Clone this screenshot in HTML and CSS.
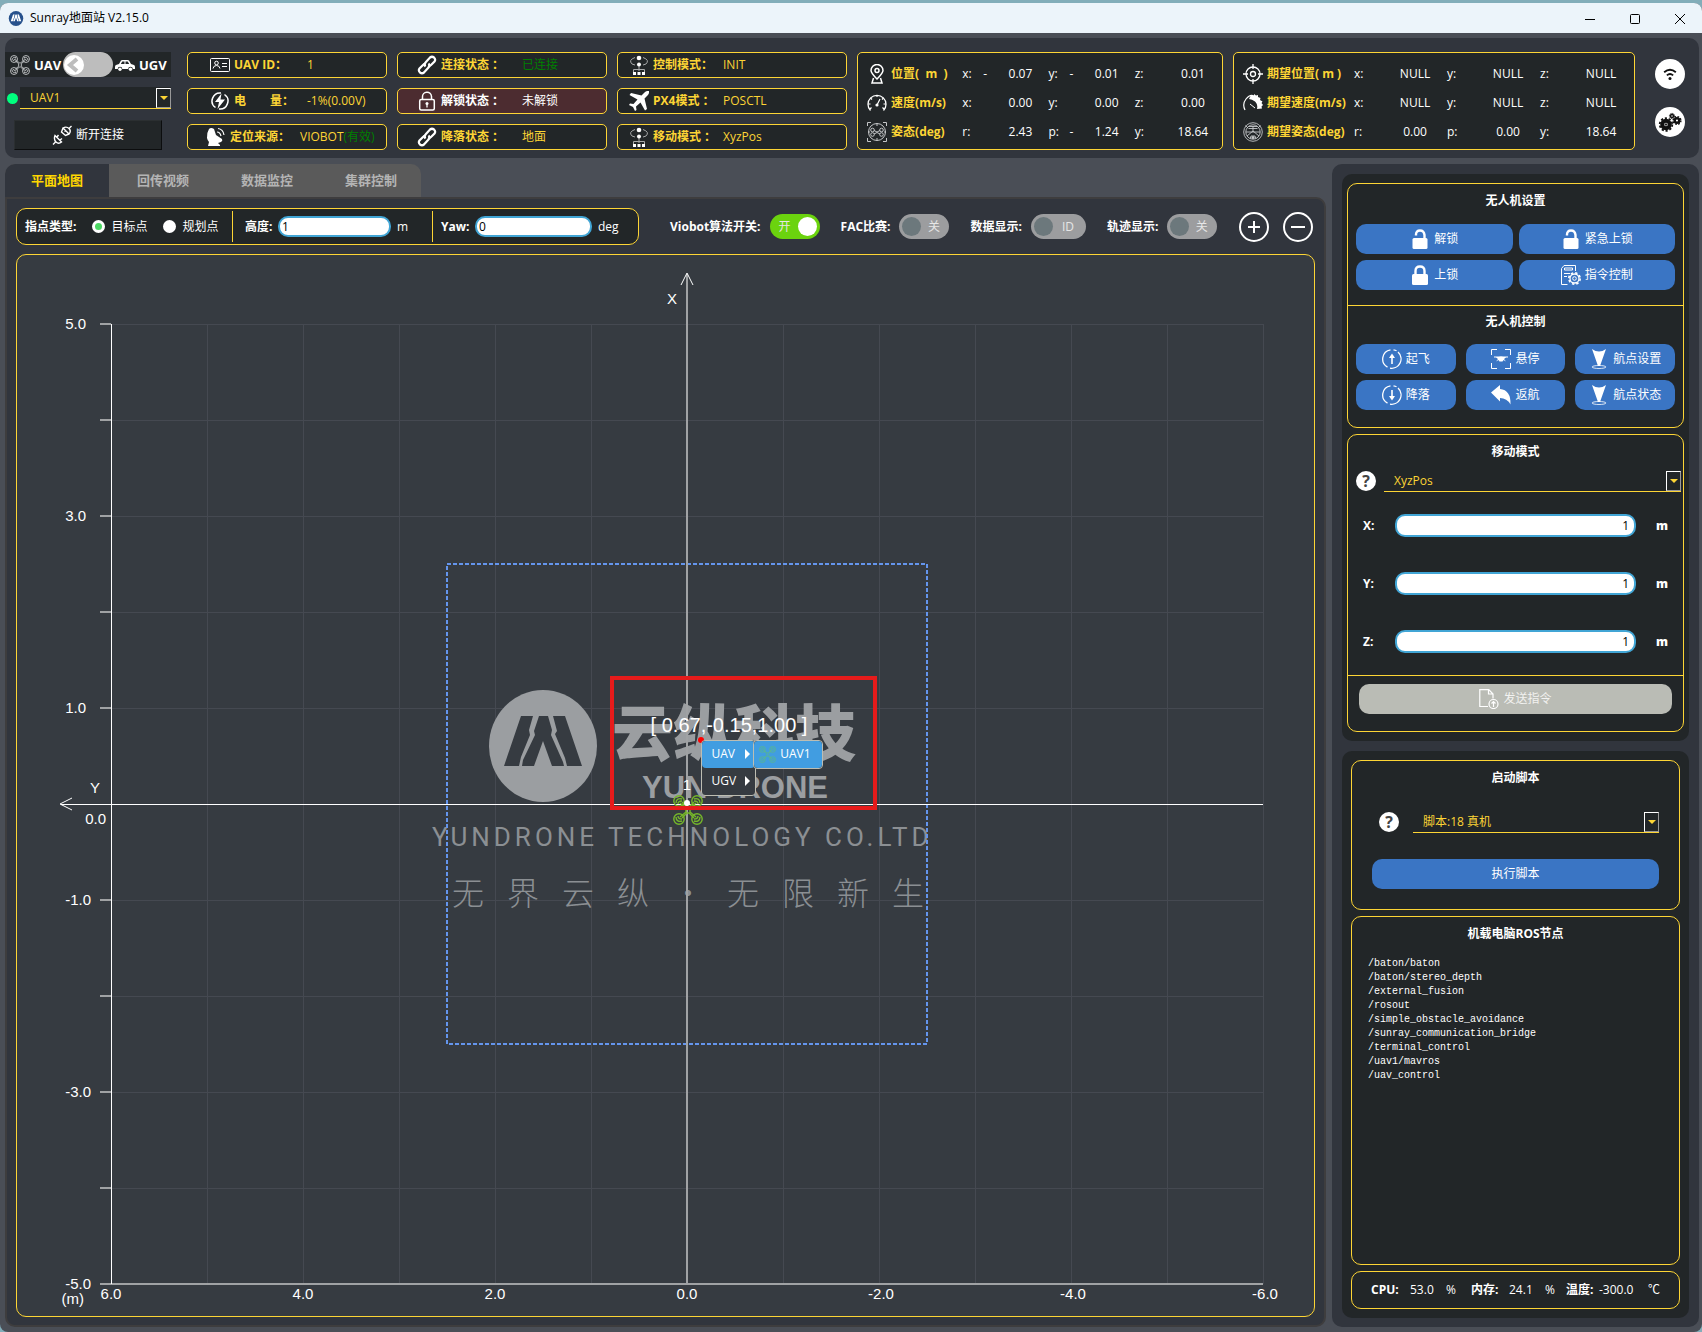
FILE: index.html
```html
<!DOCTYPE html>
<html lang="zh-CN">
<head>
    <meta charset="UTF-8">
    <meta name="viewport" content="width=device-width, initial-scale=1.0">
    <title>Sunray地面站 V2.15.0</title>
    <link rel="stylesheet" href="styles.css">
</head>
<body>
    <!-- 图标 -->
    <svg class="sprite" aria-hidden="true">
        <symbol id="i-logo" viewBox="0 0 108 112">
            <ellipse cx="54" cy="56" rx="54" ry="56" fill="currentColor"/>
            <path class="cut" d="M32 26h12l-4 14 1 5-9 22-2 9H15zM50 26h9l4 14-1 5 12 27 1 4H63L54 51l-9 25H33l1-6 12-25-1-4zM64 26h12l17 50H78l-2-8-10-24 2-3z"/>
        </symbol>
        <symbol id="i-drone" viewBox="0 0 30 30">
            <g fill="none" stroke="currentColor" stroke-width="1.4">
                <circle cx="6" cy="6" r="5.2"/><circle cx="24" cy="6" r="5.2"/>
                <circle cx="6" cy="24" r="5.2"/><circle cx="24" cy="24" r="5.2"/>
                <path d="M3 8c0-4 3-5 6-4M5 9c0-2 2-3 4-3M27 8c0-4-3-5-6-4M25 9c0-2-2-3-4-3M3 22c0 4 3 5 6 4M5 21c0 2 2 3 4 3M27 22c0 4-3 5-6 4M25 21c0 2-2 3-4 3"/>
                <path d="M7 8l6 5v4l-6 5M23 8l-6 5v4l6 5M9 7l5 5h2l5-5M9 23l5-5h2l5 5"/>
            </g>
        </symbol>
        <symbol id="i-car" viewBox="0 0 20 20">
            <path d="M1 10l3-1 2-3.500q.5-.5 1.500-.5h5q1 0 1.500.5L16 9l3 1q1 .5 1 2v2h-2.200a2.300 2.300 0 0 0-4.600 0H7.300a2.300 2.300 0 0 0-4.600 0H0v-2q0-1.500 1-2z" fill="currentColor"/>
            <path class="ink" d="M7.300 6.500h2.200V9H5.800zM10.500 6.500h2.200L14.200 9h-3.700z"/>
            <circle cx="5" cy="14.300" r="1.700" fill="currentColor"/><circle cx="15.500" cy="14.300" r="1.700" fill="currentColor"/>
        </symbol>
        <symbol id="i-plug" viewBox="0 0 20 20">
            <g fill="none" stroke="currentColor" stroke-width="1.400">
                <path d="M3 10.500l6.500 6.500q-3 2.500-5.500 0t-1-6.500zM3.500 17L1 19.500M5 12l1.500-2M8 15l2-1.500"/>
                <path d="M11 3l6 6q2.500-3 0-5.500T11 3zM17 3.500L19.500 1M11 3L9.500 7l4 3.500L17 9M12.500 6.500l1.500-1"/>
            </g>
        </symbol>
        <symbol id="i-card" viewBox="0 0 20 20">
            <g fill="none" stroke="currentColor">
                <rect x=".5" y="3.500" width="19" height="13" rx="1"/>
                <circle cx="6.500" cy="8" r="1.800"/><path d="M3 13.500q.5-3 3.500-3t3.500 3M12 8.500h5M12 11.500h5"/>
            </g>
        </symbol>
        <symbol id="i-bolt" viewBox="0 0 20 20">
            <path d="M11 2a8 8 0 0 0-5.500 14.500M9 18a8 8 0 0 0 5.500-14.500" fill="none" stroke="currentColor" stroke-width="1.500"/>
            <path d="M11.500 2.500L5 11h4l-1.500 7L15 8.500h-4.500z" fill="currentColor"/>
        </symbol>
        <symbol id="i-dish" viewBox="0 0 20 20">
            <path d="M3 2q2-2 5 0l2 6 6 4q1 2-1 3l-3 1 2 2v1H2l1-4q-1.500-1.500-2-4-.500-5 2-9z" fill="currentColor"/>
            <path d="M11 5q3 0 4 4M12 1.500q5 .5 6 6.500" fill="none" stroke="currentColor" stroke-width="1.200"/>
        </symbol>
        <symbol id="i-link" viewBox="0 0 20 20">
            <g fill="none" stroke="currentColor" stroke-width="2.200">
                <path d="M8.500 11.500q-2-2 0-4l4.500-5q2-1.500 4 0 2 2 .5 4L14 10q-1.500 1.500-3 1"/>
                <path d="M11.500 8.500q2 2 0 4l-4.500 5q-2 1.500-4 0-2-2-.5-4L6 10q1.500-1.500 3-1"/>
            </g>
        </symbol>
        <symbol id="i-lock-line" viewBox="0 0 20 20">
            <path d="M5.500 8V6a4.500 4.500 0 0 1 9-.5V8" fill="none" stroke="currentColor" stroke-width="1.500"/>
            <rect x="2.700" y="8.500" width="14.600" height="10.500" rx="1.500" fill="none" stroke="currentColor" stroke-width="1.500"/>
            <circle cx="10" cy="12.500" r="1.500" fill="currentColor"/><path d="M10 13v3.500" stroke="currentColor" stroke-width="1.300"/>
        </symbol>
        <symbol id="i-mode" viewBox="0 0 20 20">
            <g fill="none" stroke="currentColor" opacity=".6"><path d="M6 2.500Q-1 5 3 9l3 1M14 2.500q7 2.500 3 6.500l-3 1"/><path d="M10 11v5M4.500 17v-2.500h11V17"/></g>
            <circle cx="10" cy="3" r="2.300" fill="currentColor"/><circle cx="10" cy="9.500" r="2" fill="currentColor"/>
            <path d="M4 17h3v3H4zM8.500 17h3v3h-3zM13 17h3v3h-3z" fill="currentColor"/>
        </symbol>
        <symbol id="i-plane" viewBox="0 0 20 20">
            <path d="M20 0q-2.500-.5-4.500 1.500L12.500 4.500 2 2 .5 4l8 4.500-4 4.500L1 12.500 0 14l4 2 2 4 1.500-1L7 15.500l4.500-4L16 19.500l2-1.500-2.500-10.500 3-3Q20.500 2.500 20 0z" fill="currentColor"/>
        </symbol>
        <symbol id="i-pin" viewBox="0 0 20 20">
            <g fill="none" stroke="currentColor" stroke-width="1.500">
                <path d="M10 15Q4 9 4 6.500a6 6 0 0 1 12 0Q16 9 10 15z"/><circle cx="10" cy="6.500" r="2"/>
                <path d="M6.500 14L5 19h10l-1.500-5"/>
            </g>
        </symbol>
        <symbol id="i-gauge" viewBox="0 0 20 20">
            <path d="M3.500 17.500a9 9 0 1 1 13 0" fill="none" stroke="currentColor" stroke-width="1.300"/>
            <path d="M3 16l1.500-1.500M1 11h2.500M3.500 5l1.500 1.500M10 2v2M16.500 5L15 6.500M19 11h-2.500M17 16l-1.500-1.500M10 12l3-6" stroke="currentColor" stroke-width="1.200"/>
            <circle cx="10" cy="12" r="1.600" fill="currentColor"/>
        </symbol>
        <symbol id="i-attitude" viewBox="0 0 20 20">
            <g fill="none" stroke="currentColor">
                <path d="M.5 4V.5H4M16 .5h3.500V4M19.500 16v3.500H16M4 19.500H.5V16" /><circle cx="10" cy="10" r="8.500"/>
                <circle cx="5.500" cy="8" r="1.800"/><circle cx="14.500" cy="8" r="1.800"/><circle cx="5.500" cy="12.500" r="1.800"/><circle cx="14.500" cy="12.500" r="1.800"/>
                <path d="M7 8.500l3 1.500 3-1.500M7 12l3-1.500 3 1.500M10 1v3M10 16v3M1 10h2M17 10h2"/>
            </g>
        </symbol>
        <symbol id="i-target" viewBox="0 0 20 20">
            <g fill="none" stroke="currentColor" stroke-width="1.300"><circle cx="10" cy="10" r="7"/><circle cx="10" cy="10" r="2.500"/><path d="M10 0v5M10 15v5M0 10h5M15 10h5"/></g>
        </symbol>
        <symbol id="i-speed" viewBox="0 0 20 20">
            <path d="M2 17Q-1 11 3 6t8-3" fill="none" stroke="currentColor" stroke-width="1.200"/>
            <path d="M8 2l3 1V1l2 1.500L15 2v2l2.500 1-.5 2 2.500 1.500-1 1.500L20 12l-1.500 1.500.5 2-5 .5q1-5-2-7.500T6 6z" fill="currentColor"/>
            <path d="M7 11l5 4" stroke="currentColor"/>
        </symbol>
        <symbol id="i-compass" viewBox="0 0 20 20">
            <g fill="none" stroke="currentColor" stroke-width=".9"><circle cx="10" cy="10" r="9.300"/><circle cx="10" cy="10" r="7.200"/>
                <path d="M3 10h14M6 6.500h8M6 4.500l8 0M10 4v6M4 14l6-5 6 5M7 17l1-3h4l1 3M2.500 3.500l3 3M17.500 3.500l-3 3"/></g>
            <circle cx="10" cy="15.500" r="1.500" fill="currentColor"/>
        </symbol>
        <symbol id="i-wifi" viewBox="0 0 20 20">
            <path d="M3.500 8q6.500-5.500 13 0M6.500 11.500q3.500-3 7 0" fill="none" stroke="currentColor" stroke-width="2"/><circle cx="10" cy="15" r="1.700" fill="currentColor"/>
        </symbol>
        <symbol id="i-gears" viewBox="0 0 24 20">
            <g fill="none" stroke="currentColor">
                <circle cx="8" cy="12.500" r="3.800" stroke-width="4"/><circle cx="8" cy="12.500" r="6.300" stroke-width="1.800" stroke-dasharray="2.200 1.758"/>
                <circle cx="8" cy="12.500" r=".8" fill="currentColor"/>
                <circle cx="19" cy="8.500" r="2.300" stroke-width="2.500"/><circle cx="19" cy="8.500" r="3.900" stroke-width="1.400" stroke-dasharray="1.700 1.363"/>
                <circle cx="14" cy="4" r="1.500" stroke-width="1.500"/><circle cx="14" cy="4" r="2.600" stroke-dasharray="1.200 .842"/>
            </g>
        </symbol>
        <symbol id="i-unlock" viewBox="0 0 20 20">
            <path d="M6 6.500V5.500Q6 1.500 10 1.500T14.500 6v5" fill="none" stroke="currentColor" stroke-width="2.400"/><rect x="2.500" y="9" width="15" height="11" rx="1.500" fill="currentColor"/>
        </symbol>
        <symbol id="i-lock" viewBox="0 0 20 20">
            <path d="M5.500 10V6q0-4.500 4.500-4.500T14.500 6v4" fill="none" stroke="currentColor" stroke-width="2.400"/><rect x="2" y="9" width="16" height="11" rx="1.500" fill="currentColor"/>
        </symbol>
        <symbol id="i-command" viewBox="0 0 20 20">
            <g fill="none" stroke="currentColor"><path d="M6.500 19.500H.5V3.500L3 .5h11.500V6M3.500 3h8v2h-8zM3 8.500h6M3 11.500h3"/><circle cx="13.500" cy="13.500" r="1.800"/><circle cx="13.500" cy="13.500" r="4.500" stroke-width="1.300"/><circle cx="13.500" cy="13.500" r="5.700" stroke-width="1.600" stroke-dasharray="2.400 2.077"/></g>
        </symbol>
        <symbol id="i-up" viewBox="0 0 20 20">
            <path d="M8.500.8a9.300 9.300 0 0 0-3 17.300M8 19.100a9.300 9.300 0 0 0 8-16M11.500.8q2 .3 3 1" fill="none" stroke="currentColor" stroke-width="1.300"/><path d="M10 15V7" stroke="currentColor" stroke-width="1.600"/><path d="M10 4.500L13 9H7z" fill="currentColor"/>
        </symbol>
        <symbol id="i-down" viewBox="0 0 20 20">
            <path d="M8.500.8a9.300 9.300 0 0 0-3 17.300M8 19.100a9.300 9.300 0 0 0 8-16M11.500.8q2 .3 3 1" fill="none" stroke="currentColor" stroke-width="1.300"/><path d="M10 5v8" stroke="currentColor" stroke-width="1.600"/><path d="M10 15.500L7 11h6z" fill="currentColor"/>
        </symbol>
        <symbol id="i-hover" viewBox="0 0 20 20">
            <path d="M.5 6V.5H6M14 .5h5.500V6M19.500 14v5.500H14M6 19.500H.5V14" fill="none" stroke="currentColor"/><path d="M3 7.500h4.500q2.500-.7 5 0H17v1h-2l-2 1.500 2 2.500-2.500-1.500-1 1.500h-3l-1-1.500L5 12.500 7 10 5 8.500H3z" fill="currentColor"/>
        </symbol>
        <symbol id="i-back" viewBox="0 0 20 20">
            <path d="M0 7.500L9 0v4q11 1 10.500 15.500Q16 13 9 13v3.500z" fill="currentColor"/>
        </symbol>
        <symbol id="i-waypoint" viewBox="0 0 20 20">
            <path d="M3 0q7 5 14 0L11 17H9z" fill="currentColor"/><ellipse cx="10" cy="18" rx="7" ry="1.500" fill="none" stroke="currentColor" stroke-width=".8"/>
        </symbol>
        <symbol id="i-send" viewBox="0 0 20 20">
            <g fill="none" stroke="currentColor" stroke-width="1.200"><path d="M9 17.500H.8V.7h9L14 5v4.500M9.500.7V5H14"/><circle cx="14.500" cy="15" r="4.500"/><path d="M14.500 18v-5.500M12.500 14.500l2-2 2 2"/></g>
        </symbol>
    </svg>

    <div class="window">
        <div class="titlebar">
            <svg class="logo"><use href="#i-logo"/></svg>
            <span class="title">Sunray地面站 V2.15.0</span>
            <button class="win-btn" aria-label="最小化"><svg viewBox="0 0 10 10"><path d="M0 5.500h10"/></svg></button>
            <button class="win-btn" aria-label="最大化"><svg viewBox="0 0 10 10"><rect x=".5" y=".5" width="9" height="9" rx="1"/></svg></button>
            <button class="win-btn" aria-label="关闭"><svg viewBox="0 0 10 10"><path d="M0 0l10 10M10 0L0 10"/></svg></button>
        </div>

        <header class="header">
            <div class="vehicle">
                <div class="vehicle-type">
                    <svg class="icon dim"><use href="#i-drone"/></svg>
                    <span>UAV</span>
                    <button class="type-switch" role="switch" aria-checked="false" aria-label="UAV / UGV"><svg viewBox="0 0 20 20"><circle cx="10" cy="10" r="10"/><path d="M13 4l-7 6 7 6"/></svg></button>
                    <svg class="icon"><use href="#i-car"/></svg>
                    <span>UGV</span>
                </div>
                <div class="vehicle-select">
                    <i class="online"></i>
                    <div class="combo filled"><select aria-label="无人机"><option>UAV1</option></select><i class="drop"></i></div>
                </div>
                <button class="disconnect"><svg class="icon"><use href="#i-plug"/></svg>断开连接</button>
            </div>

            <div class="fields f1">
                <div class="field"><div class="label"><svg class="icon"><use href="#i-card"/></svg>UAV ID：</div><span>1</span></div>
                <div class="field"><div class="label"><svg class="icon"><use href="#i-bolt"/></svg>电&emsp;&emsp;量：</div><span>-1%(0.00V)</span></div>
                <div class="field compact"><div class="label"><svg class="icon"><use href="#i-dish"/></svg>定位来源：</div><span>VIOBOT<em>(有效)</em></span></div>
            </div>
            <div class="fields f2">
                <div class="field"><div class="label"><svg class="icon"><use href="#i-link"/></svg>连接状态 ：</div><em>已连接</em></div>
                <div class="field alert"><div class="label"><svg class="icon"><use href="#i-lock-line"/></svg>解锁状态 ：</div><span>未解锁</span></div>
                <div class="field"><div class="label"><svg class="icon"><use href="#i-link"/></svg>降落状态 ：</div><span>地面</span></div>
            </div>
            <div class="fields f3">
                <div class="field"><div class="label"><svg class="icon"><use href="#i-mode"/></svg>控制模式：</div><span>INIT</span></div>
                <div class="field"><div class="label"><svg class="icon"><use href="#i-plane"/></svg>PX4模式 ：</div><span>POSCTL</span></div>
                <div class="field"><div class="label"><svg class="icon"><use href="#i-mode"/></svg>移动模式 ：</div><span>XyzPos</span></div>
            </div>

            <div class="readout actual">
                <table>
                    <colgroup><col class="c-icon"><col class="c-name"><col class="c-key"><col class="c-sign"><col class="c-val"><col class="c-key"><col class="c-sign"><col class="c-val"><col class="c-key"><col class="c-sign"><col class="c-val"></colgroup>
                    <tr><td><svg class="icon"><use href="#i-pin"/></svg></td><th>位置(&nbsp; m &nbsp;)</th><td class="key">x:</td><td class="sign">-</td><td>0.07</td><td class="key">y:</td><td class="sign">-</td><td>0.01</td><td class="key">z:</td><td></td><td>0.01</td></tr>
                    <tr><td><svg class="icon"><use href="#i-gauge"/></svg></td><th>速度(m/s)</th><td class="key">x:</td><td></td><td>0.00</td><td class="key">y:</td><td></td><td>0.00</td><td class="key">z:</td><td></td><td>0.00</td></tr>
                    <tr><td><svg class="icon dim"><use href="#i-attitude"/></svg></td><th>姿态(deg)</th><td class="key">r:</td><td></td><td>2.43</td><td class="key">p:</td><td class="sign">-</td><td>1.24</td><td class="key">y:</td><td></td><td>18.64</td></tr>
                </table>
            </div>
            <div class="readout expected">
                <table>
                    <colgroup><col class="c-icon"><col class="c-name"><col class="c-key"><col class="c-val"><col class="c-key"><col class="c-val"><col class="c-key"><col class="c-val"></colgroup>
                    <tr><td><svg class="icon"><use href="#i-target"/></svg></td><th>期望位置( m )</th><td class="key">x:</td><td>NULL</td><td class="key">y:</td><td>NULL</td><td class="key">z:</td><td>NULL</td></tr>
                    <tr><td><svg class="icon"><use href="#i-speed"/></svg></td><th>期望速度(m/s)</th><td class="key">x:</td><td>NULL</td><td class="key">y:</td><td>NULL</td><td class="key">z:</td><td>NULL</td></tr>
                    <tr><td><svg class="icon dim"><use href="#i-compass"/></svg></td><th>期望姿态(deg)</th><td class="key">r:</td><td>0.00</td><td class="key">p:</td><td>0.00</td><td class="key">y:</td><td>18.64</td></tr>
                </table>
            </div>
            <div class="tools">
                <button aria-label="网络"><svg width="18" height="18"><use href="#i-wifi"/></svg></button>
                <button aria-label="设置"><svg width="24" height="20"><use href="#i-gears"/></svg></button>
            </div>
        </header>

        <main class="main">
            <section class="left">
                <nav class="tabs">
                    <button class="active">平面地图</button>
                    <button>回传视频</button>
                    <button>数据监控</button>
                    <button>集群控制</button>
                </nav>
                <div class="tab-panel">
                    <div class="toolbar">
                        <div class="point-box">
                            <div class="part type">
                                <b>指点类型:</b>
                                <label><input type="radio" name="point" checked>目标点</label>
                                <label><input type="radio" name="point">规划点</label>
                            </div>
                            <div class="part height">
                                <label for="height"><b>高度:</b></label>
                                <input id="height" type="text" value="1"><span>m</span>
                            </div>
                            <div class="part yaw">
                                <label for="yaw"><b>Yaw:</b></label>
                                <input id="yaw" type="text" value="0"><span>deg</span>
                            </div>
                        </div>
                        <div class="switches">
                            <label for="sw-viobot">Viobot算法开关:</label><button id="sw-viobot" class="switch on" role="switch" aria-checked="true">开</button>
                            <label for="sw-fac">FAC比赛:</label><button id="sw-fac" class="switch" role="switch" aria-checked="false">关</button>
                            <label for="sw-data">数据显示:</label><button id="sw-data" class="switch wide" role="switch" aria-checked="false">ID</button>
                            <label for="sw-track">轨迹显示:</label><button id="sw-track" class="switch" role="switch" aria-checked="false">关</button>
                        </div>
                        <div class="zoom">
                            <button aria-label="放大"><svg viewBox="0 0 30 30"><circle cx="15" cy="15" r="14"/><path d="M9 15h12M15 9v12"/></svg></button>
                            <button aria-label="缩小"><svg viewBox="0 0 30 30"><circle cx="15" cy="15" r="14"/><path d="M8 15h14"/></svg></button>
                        </div>
                    </div>

                    <div class="map">
                        <svg class="plot" viewBox="17 255 1297 1061">
                            <path class="grid" d="M207 324V1284M303 324V1284M399 324V1284M495 324V1284M591 324V1284M783 324V1284M879 324V1284M975 324V1284M1071 324V1284M1167 324V1284M1263 324V1284M111 324H1263M111 420H1263M111 516H1263M111 612H1263M111 708H1263M111 900H1263M111 996H1263M111 1092H1263M111 1188H1263"/>
                            <g class="watermark">
                                <svg x="489" y="690" width="108" height="112"><use href="#i-logo"/></svg>
                                <text class="wm-name" x="612" y="756">云纵科技</text>
                                <text class="wm-en" x="642" y="798">YUN DRONE</text>
                                <text class="wm-company" x="432" y="846">YUNDRONE TECHNOLOGY CO.LTD</text>
                                <text class="wm-slogan" x="452" y="905">无界云纵・无限新生</text>
                            </g>
                            <rect class="fence" x="447" y="564" width="480" height="480"/>
                            <path class="ticks" d="M100 324H111M100 420H111M100 516H111M100 612H111M100 708H111M100 900H111M100 996H111M100 1092H111M100 1188H111M100 1284H1263M687 274V1284"/>
                            <path class="axis" d="M111 324V1284M61 804H1263"/>
                            <path class="arrow" d="M681 285L687 273L693 285M72 798L60 804L72 810"/>
                            <g class="ylabels">
                                <text x="86" y="329">5.0</text><text x="86" y="521">3.0</text><text x="86" y="713">1.0</text>
                                <text x="106" y="824">0.0</text>
                                <text x="91" y="905">-1.0</text><text x="91" y="1097">-3.0</text><text x="91" y="1289">-5.0</text>
                                <text x="84" y="1304">(m)</text><text x="100" y="793">Y</text><text x="677" y="304">X</text>
                            </g>
                            <g class="xlabels">
                                <text x="111" y="1299">6.0</text><text x="303" y="1299">4.0</text><text x="495" y="1299">2.0</text><text x="687" y="1299">0.0</text>
                                <text x="881" y="1299">-2.0</text><text x="1073" y="1299">-4.0</text><text x="1265" y="1299">-6.0</text>
                            </g>
                            <text class="uav-id" x="687" y="790">1</text>
                            <svg class="uav" x="673" y="795" width="30" height="30"><use href="#i-drone"/></svg>
                            <circle cx="687" cy="803" r="3" fill="#fff"/>
                            <rect class="mark" x="612" y="678" width="263" height="130"/>
                            <text class="cursor-pos" x="729" y="732">[ 0.67,-0.15,1.00 ]</text>
                            <circle cx="701" cy="740" r="3" fill="#f00"/>
                        </svg>
                        <div class="menu">
                            <button class="selected">UAV<i></i></button>
                            <button>UGV<i></i></button>
                        </div>
                        <div class="menu submenu">
                            <button class="selected"><svg width="17" height="17"><use href="#i-drone"/></svg>UAV1</button>
                        </div>
                    </div>
                </div>
            </section>

            <aside class="right">
                <div class="group control">
                    <section class="box">
                        <h2>无人机设置</h2>
                        <div class="buttons two">
                            <button class="blue"><svg class="icon"><use href="#i-unlock"/></svg>解锁</button>
                            <button class="blue"><svg class="icon"><use href="#i-unlock"/></svg>紧急上锁</button>
                            <button class="blue"><svg class="icon"><use href="#i-lock"/></svg>上锁</button>
                            <button class="blue"><svg class="icon"><use href="#i-command"/></svg>指令控制</button>
                        </div>
                        <h2 class="divided">无人机控制</h2>
                        <div class="buttons three">
                            <button class="blue"><svg class="icon"><use href="#i-up"/></svg>起飞</button>
                            <button class="blue"><svg class="icon"><use href="#i-hover"/></svg>悬停</button>
                            <button class="blue"><svg class="icon"><use href="#i-waypoint"/></svg>航点设置</button>
                            <button class="blue"><svg class="icon"><use href="#i-down"/></svg>降落</button>
                            <button class="blue"><svg class="icon"><use href="#i-back"/></svg>返航</button>
                            <button class="blue"><svg class="icon"><use href="#i-waypoint"/></svg>航点状态</button>
                        </div>
                    </section>
                    <section class="box">
                        <h2>移动模式</h2>
                        <div class="mode">
                            <button class="help" aria-label="帮助">?</button>
                            <div class="combo"><select aria-label="移动模式"><option>XyzPos</option></select><i class="drop"></i></div>
                        </div>
                        <div class="coords">
                            <div class="coord"><label for="px">X:</label><input id="px" type="text" value="1"><b>m</b></div>
                            <div class="coord"><label for="py">Y:</label><input id="py" type="text" value="1"><b>m</b></div>
                            <div class="coord"><label for="pz">Z:</label><input id="pz" type="text" value="1"><b>m</b></div>
                        </div>
                        <div class="send">
                            <button class="blue" disabled><svg class="icon"><use href="#i-send"/></svg>发送指令</button>
                        </div>
                    </section>
                </div>

                <div class="group onboard">
                    <section class="box script">
                        <h2>启动脚本</h2>
                        <div class="script-row">
                            <button class="help" aria-label="帮助">?</button>
                            <div class="combo"><select aria-label="脚本"><option>脚本:18 真机</option></select><i class="drop"></i></div>
                        </div>
                        <button class="blue">执行脚本</button>
                    </section>
                    <section class="box nodes">
                        <h2>机载电脑ROS节点</h2>
                        <ul>
                            <li>/baton/baton</li>
                            <li>/baton/stereo_depth</li>
                            <li>/external_fusion</li>
                            <li>/rosout</li>
                            <li>/simple_obstacle_avoidance</li>
                            <li>/sunray_communication_bridge</li>
                            <li>/terminal_control</li>
                            <li>/uav1/mavros</li>
                            <li>/uav_control</li>
                        </ul>
                    </section>
                    <section class="box status">
                        <b>CPU:</b><span>53.0</span><span>%</span>
                        <b>内存:</b><span>24.1</span><span>%</span>
                        <b>温度:</b><span>-300.0</span><span>℃</span>
                    </section>
                </div>
            </aside>
        </main>
    </div>
</body>
</html>
```
FILE: styles.css
```css
* {
    box-sizing: border-box;
}

body {
    margin: 0;
    padding-top: 3px;
    min-height: 100vh;
    display: flex;
    background: #82adb9;
    font-family: "Open Sans", "Noto Sans CJK SC", sans-serif;
    font-size: 12px;
    line-height: 16px;
    color: #fff;
}

button, input, select {
    font: inherit;
    color: inherit;
    margin: 0;
    padding: 0;
    border: none;
    background: none;
}

h2 {
    margin: 0;
    font-size: 12px;
    line-height: 33px;
    text-align: center;
}

em {
    font-style: normal;
    color: #008000;
}

.sprite {
    position: absolute;
    width: 0;
    height: 0;
}

.cut {
    fill: var(--cut, #363b41);
}

.ink {
    fill: #222628;
}

.icon {
    width: 20px;
    height: 20px;
    flex: none;
    color: #fff;
}

.dim {
    color: #c4c6c8;
}

.window {
    flex: 1;
    display: flex;
    flex-direction: column;
    border-radius: 8px;
    overflow: hidden;
    background: #4a4e56;
}

/* 标题栏 */
.titlebar {
    height: 30px;
    display: flex;
    align-items: center;
    padding-left: 8px;
    background: #ecf4fa;
    color: #000;
}

.logo {
    --cut: #fff;
    width: 16px;
    height: 15px;
    color: #27518c;
}

.title {
    flex: 1;
    padding-left: 6px;
}

.win-btn {
    width: 45px;
    height: 30px;
}

.win-btn svg {
    width: 10px;
    height: 10px;
    fill: none;
    stroke: #000;
    overflow: visible;
    vertical-align: middle;
}

/* 顶部状态 */
.header {
    margin: 5px 3px 0 5px;
    height: 120px;
    padding: 14px 14px 8px 0;
    display: flex;
    gap: 10px;
    border-radius: 10px;
    background: #31353d;
}

.vehicle {
    width: 166px;
    margin-right: 6px;
}

.vehicle-type {
    height: 25px;
    padding-left: 5px;
    display: flex;
    align-items: center;
    background: #222628;
    font-size: 13px;
    font-weight: bold;
}

.vehicle-type span {
    width: 28px;
    margin-left: 4px;
}

.type-switch {
    width: 50px;
    height: 25px;
    margin: 0 2px 0 1px;
    padding-left: 1px;
    border-radius: 13px;
    background: #bdbdbd;
    text-align: left;
}

.type-switch svg {
    width: 20px;
    height: 20px;
    display: block;
    fill: #fff;
}

.type-switch path {
    fill: none;
    stroke: #bdbdbd;
    stroke-width: 4;
}

.vehicle-select {
    margin: 10px 0 11px 2px;
    display: flex;
    align-items: center;
    gap: 2px;
}

.online {
    width: 11px;
    height: 11px;
    border-radius: 50%;
    background: #00ff7f;
}

.combo {
    position: relative;
    flex: 1;
    height: 22px;
    border-bottom: 1px solid #fdd535;
    color: #fdd535;
}

.combo.filled {
    background: #222628;
}

.combo select {
    width: 100%;
    height: 21px;
    padding: 0 10px;
    appearance: none;
}

.drop {
    position: absolute;
    right: 0;
    top: 1px;
    width: 15px;
    height: 20px;
    border: 1px solid #fff;
    border-right-color: #999;
    border-bottom-color: #999;
    background: #222628;
    pointer-events: none;
}

.drop::after {
    content: "";
    position: absolute;
    left: 3px;
    top: 7px;
    border: 4px solid transparent;
    border-top-color: #fdd535;
    border-bottom: none;
}

.disconnect {
    width: 148px;
    height: 30px;
    margin-left: 9px;
    display: flex;
    align-items: center;
    justify-content: center;
    gap: 4px;
    border: 1px solid #2b2f31;
    border-right-color: #0c0d0e;
    border-bottom-color: #0c0d0e;
    background: #222628;
}

.fields {
    display: flex;
    flex-direction: column;
    gap: 10px;
    color: #fdd535;
}

.field {
    height: 26px;
    display: flex;
    align-items: center;
    border: 1px solid #fdd535;
    border-radius: 5px;
    background: #222628;
    white-space: nowrap;
}

.label {
    display: flex;
    align-items: center;
    gap: 4px;
    font-weight: bold;
}

.f1 { width: 200px; }
.f2 { width: 210px; }
.f3 { width: 230px; }
.f1 .field { padding-left: 22px; }
.f2 .field { padding-left: 19px; }
.f3 .field { padding-left: 11px; }
.f1 .label { width: 97px; }
.f2 .label { width: 105px; }
.f3 .label { width: 94px; }

.f1 .compact { padding-left: 18px; }
.compact .label { width: 94px; }

.field.alert {
    background: #4c2c30;
    color: #fff;
}

.readout {
    height: 98px;
    padding-top: 6px;
    border: 1px solid #fdd535;
    border-radius: 5px;
    background: #222628;
}

.readout table {
    table-layout: fixed;
    border-collapse: collapse;
}

.readout tr {
    height: 29px;
}

.readout th, .readout td {
    padding: 0;
    text-align: center;
    white-space: nowrap;
}

.readout th {
    padding-left: 2px;
    text-align: left;
    color: #fdd535;
}

.readout .key {
    padding-left: 4px;
    text-align: left;
}

.readout .sign {
    padding-left: 4px;
    text-align: left;
}

.readout .icon {
    display: block;
    margin-left: 9px;
}

.actual { width: 366px; }
.actual table { width: 359px; }
.actual .c-icon { width: 31px; }
.actual .c-name { width: 69px; }
.actual .c-key { width: 21px; }
.actual .c-sign { width: 17px; }
.actual .c-val { width: 48px; }

.expected { width: 402px; }
.expected table { width: 395px; }
.expected .c-icon { width: 31px; }
.expected .c-name { width: 85px; }
.expected .c-key { width: 37px; }
.expected .c-val { width: 56px; }

.tools {
    margin-left: auto;
    padding-top: 7px;
    display: flex;
    flex-direction: column;
    gap: 18px;
}

.tools button {
    width: 30px;
    height: 30px;
    display: flex;
    align-items: center;
    justify-content: center;
    border-radius: 50%;
    background: #fff;
    color: #111;
}

/* 主区域 */
.main {
    flex: 1;
    display: flex;
    gap: 6px;
    padding: 6px 3px 5px 5px;
}

.left {
    flex: 1;
    min-width: 0;
    display: flex;
    flex-direction: column;
}

.tabs {
    display: flex;
    align-self: flex-start;
    border-radius: 10px 10px 0 0;
    overflow: hidden;
    background: #5a5a5a;
}

.tabs button {
    width: 104px;
    height: 33px;
    padding: 0 0 2px 4px;
    font-size: 13px;
    font-weight: bold;
    color: #b4b4b4;
}

.tabs .active {
    padding-left: 0;
    background: #31353d;
    color: #ffd700;
}

.tab-panel {
    flex: 1;
    display: flex;
    flex-direction: column;
    gap: 9px;
    padding: 9px 9px 8px;
    border: 2px solid #3e3d3e;
    border-radius: 0 10px 10px 10px;
    background: #31353d;
}

.toolbar {
    height: 37px;
    display: flex;
    align-items: center;
}

.point-box {
    flex: none;
    width: 623px;
    height: 37px;
    padding-left: 8px;
    display: flex;
    align-items: center;
    border: 1px solid #fdd535;
    border-radius: 10px;
    background: #222628;
}

.part {
    height: 31px;
    display: flex;
    align-items: center;
}

.part + .part {
    border-left: 1px solid #fdd535;
}

.type {
    width: 207px;
    gap: 16px;
}

.type label {
    display: flex;
    align-items: center;
    gap: 6px;
}

.type input {
    appearance: none;
    width: 13px;
    height: 13px;
    border: 3px solid #fff;
    border-radius: 50%;
    background: #fff;
}

.type input:checked {
    background: #4cd964;
}

.part label {
    flex: none;
}

.height {
    width: 200px;
    padding-left: 12px;
}

.yaw {
    padding-left: 8px;
}

.height b {
    display: block;
    width: 33px;
}

.yaw b {
    display: block;
    width: 34px;
}

.part span {
    padding-left: 6px;
}

input[type="text"] {
    width: 117px;
    height: 21px;
    padding: 0 2px;
    border: 2px solid #41a5d5;
    border-radius: 10px;
    background: #fff;
    color: #000;
}

.height input[type="text"] {
    width: 113px;
}

.switches {
    flex: none;
    margin-left: 31px;
    display: flex;
    align-items: center;
}

.switches label {
    font-weight: bold;
    white-space: nowrap;
    margin-right: 9px;
}

.switch {
    position: relative;
    width: 50px;
    height: 25px;
    margin-right: 21px;
    padding-left: 19px;
    border-radius: 13px;
    background: #9c9d9f;
    color: #e6e6e6;
}

.switch:last-child {
    margin-right: 0;
}

.switch::before {
    content: "";
    position: absolute;
    left: 3px;
    top: 3px;
    width: 19px;
    height: 19px;
    border-radius: 50%;
    background: #6c787c;
}

.switch.wide {
    width: 55px;
}

.switch.on {
    padding: 0 20px 0 0;
    background: #6bd30e;
}

.switch.on::before {
    left: 28px;
    background: #fff;
}

.zoom {
    margin-left: auto;
    padding-right: 2px;
    display: flex;
    gap: 14px;
}

.zoom svg {
    display: block;
    width: 30px;
    height: 30px;
    fill: none;
    stroke: #fff;
    stroke-width: 2;
}

/* 平面地图 */
.map {
    position: relative;
    flex: 1;
    border: 1px solid #fdd535;
    border-radius: 10px;
    background: #363b41;
}

.plot {
    display: block;
    width: 100%;
    height: 100%;
    font-family: "Liberation Sans", Arial, sans-serif;
    font-size: 15px;
    fill: #fff;
}

.grid {
    stroke: #454951;
    shape-rendering: crispEdges;
}

.ticks {
    stroke: #a0a2a4;
    stroke-width: 2;
}

.axis {
    stroke: #fff;
    shape-rendering: crispEdges;
}

.arrow {
    fill: none;
    stroke: #fff;
}

.fence {
    fill: none;
    stroke: #6495ed;
    stroke-width: 2;
    stroke-dasharray: 4 2;
}

.ylabels {
    text-anchor: end;
}

.xlabels, .uav-id, .cursor-pos {
    text-anchor: middle;
}

.cursor-pos {
    font-size: 20px;
}

.uav {
    color: #76b82a;
}

.mark {
    fill: none;
    stroke: #e61b1b;
    stroke-width: 4;
}

.watermark {
    fill: #9b9ea1;
    color: #9b9ea1;
}

.wm-name {
    font: 900 61px "Noto Sans CJK SC", sans-serif;
}

.wm-en {
    font-size: 31px;
    font-weight: bold;
}

.wm-company {
    font: 26px Roboto, sans-serif;
    letter-spacing: 4px;
    fill: #8b8f93;
}

.wm-slogan {
    font: 300 32px "Noto Sans CJK SC", sans-serif;
    letter-spacing: 23px;
    fill: #8b8f93;
}

.menu {
    position: absolute;
    left: calc(50% + 35px);
    top: calc(50% - 46px);
    width: 55px;
    border: 1px solid #bdbdb2;
    border-radius: 4px;
    background: #363b41;
}

.submenu {
    left: calc(50% + 87px);
    width: 70px;
}

.menu button {
    width: 100%;
    height: 27px;
    padding: 0 5px 0 10px;
    display: flex;
    align-items: center;
    justify-content: space-between;
    border-radius: 4px;
}

.menu .selected {
    background: #419de1;
}

.submenu button {
    padding: 0 11px 0 5px;
}

.submenu svg {
    color: #5ab88c;
}

.menu i {
    border: 5px solid transparent;
    border-left-color: #fff;
    border-right: none;
}

/* 右侧面板 */
.right {
    width: 367px;
    display: flex;
    flex-direction: column;
    gap: 10px;
    padding: 10px 10px 9px;
    border-radius: 10px;
    background: #31353d;
}

.group {
    display: flex;
    flex-direction: column;
    gap: 6px;
    padding: 9px;
    border-radius: 10px;
    background: #222628;
}

.control {
    padding: 9px 5px;
}

.onboard {
    flex: 1;
}

.box {
    border: 1px solid #fdd535;
    border-radius: 10px;
}

.divided {
    border-top: 1px solid #fdd535;
    line-height: 31px;
}

.buttons {
    display: grid;
    gap: 6px;
    padding: 7px 8px 15px;
}

.two {
    grid-template-columns: 1fr 1fr;
}

.three {
    grid-template-columns: 1fr 1fr 1fr;
    column-gap: 10px;
    padding-bottom: 17px;
}

.blue {
    height: 30px;
    display: flex;
    align-items: center;
    justify-content: center;
    gap: 4px;
    border-radius: 10px;
    background: #3a75c4;
}

.blue:disabled {
    background: #babcb5;
    color: #f2f2f0;
}

.mode {
    display: flex;
    align-items: center;
    gap: 8px;
    padding: 2px 2px 0 8px;
}

.help {
    width: 20px;
    height: 20px;
    flex: none;
    border-radius: 50%;
    background: #fff;
    color: #444;
    font-size: 16px;
    font-weight: bold;
    line-height: 20px;
}

.coords {
    display: flex;
    flex-direction: column;
    gap: 35px;
    padding: 22px 14px 22px 15px;
}

.coord {
    display: flex;
    align-items: center;
    font-weight: bold;
}

.coord label {
    width: 32px;
}

.coord input[type="text"] {
    flex: 1;
    min-width: 0;
    height: 23px;
    padding: 0 5px;
    text-align: right;
    font-weight: normal;
}

.coord b {
    padding: 0 1px 0 20px;
}

.send {
    padding: 8px 11px 17px;
    border-top: 1px solid #fdd535;
}

.send .blue {
    width: 100%;
}

.script {
    padding: 0 20px 20px;
}

.script-row {
    display: flex;
    align-items: center;
    gap: 14px;
    margin: 17px 0 26px;
    padding-left: 7px;
}

.script .blue {
    width: 100%;
}

.nodes {
    flex: 1;
}

.nodes ul {
    margin: 0;
    padding: 7px 16px;
    list-style: none;
    font-family: "Liberation Mono", monospace;
    font-size: 10px;
    line-height: 14px;
}

.status {
    height: 38px;
    padding-left: 19px;
    display: grid;
    grid-template-columns: 39px 36px 25px 38px 36px 21px 33px 49px 1fr;
    align-items: center;
}
```
